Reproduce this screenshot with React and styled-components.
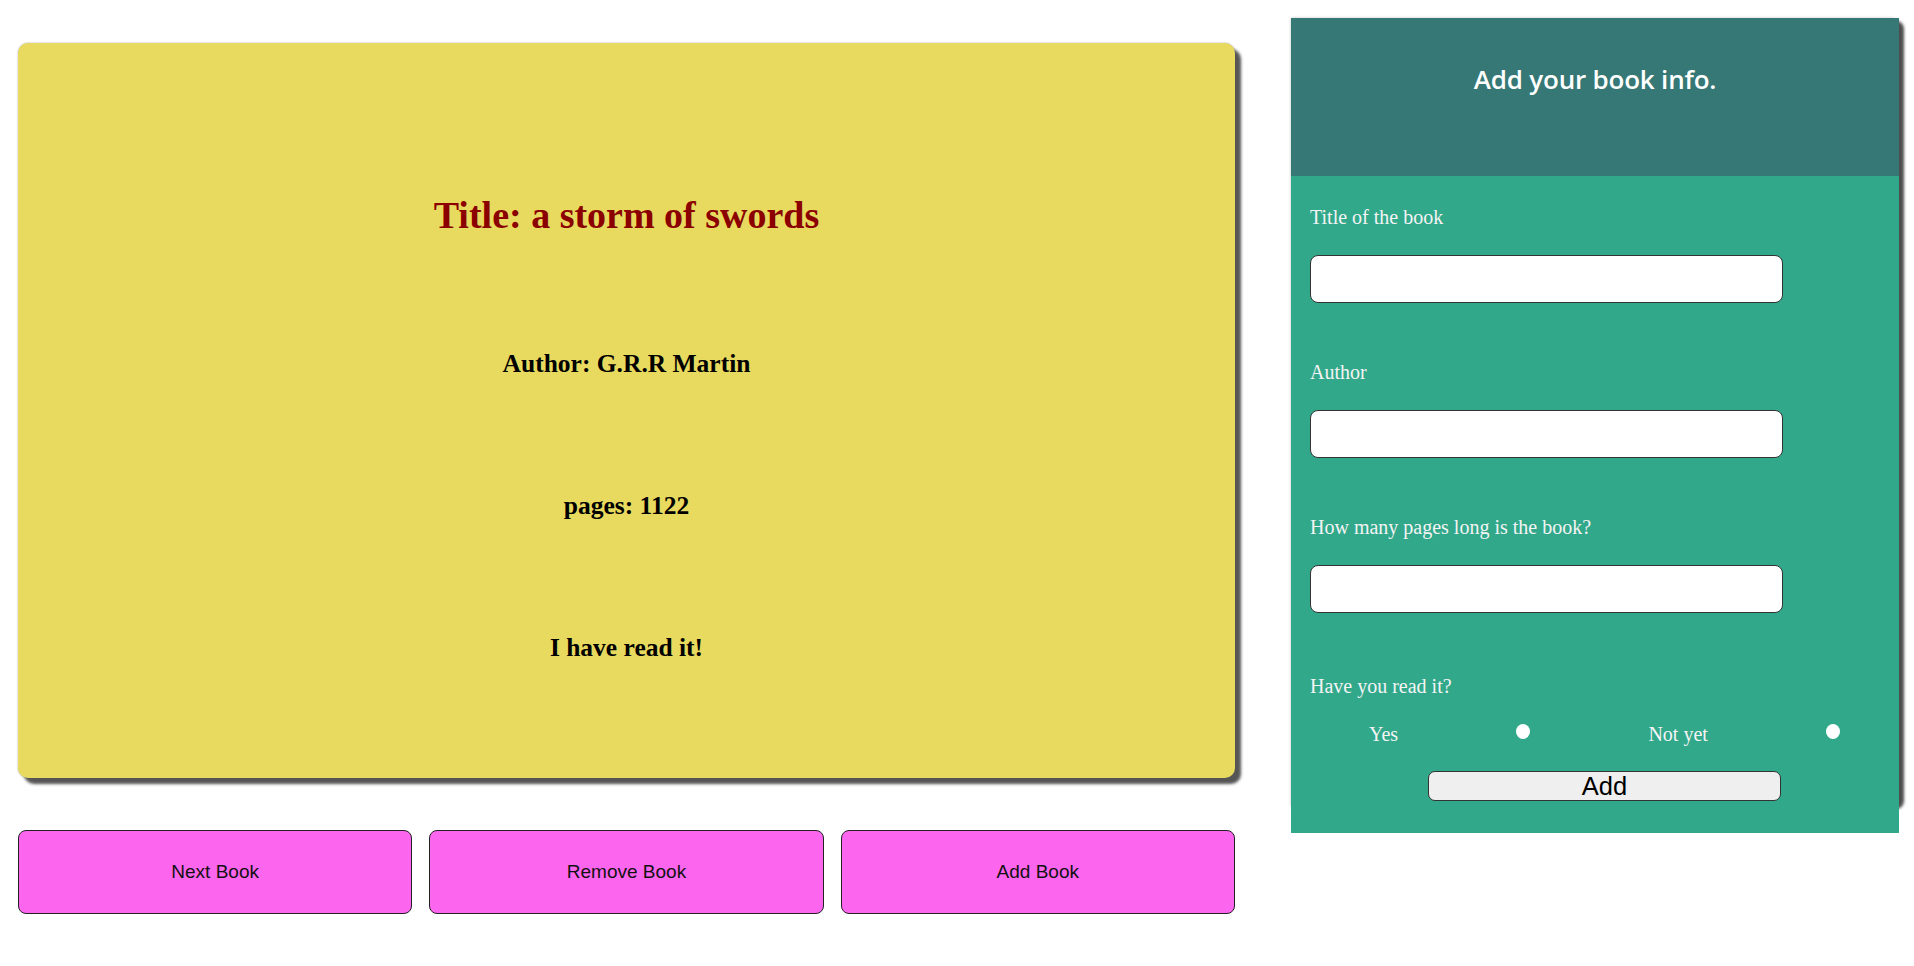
import React from "react";
import styled, { createGlobalStyle } from "styled-components";

const GlobalStyle = createGlobalStyle`
  body {
    margin: 0;
    background: #ffffff;
    font-family: "Liberation Serif", serif;
  }
`;

const Page = styled.div`
  display: flex;
  align-items: flex-start;
  gap: 56px;
  padding: 18px 0 0 18px;
`;

const LeftColumn = styled.div`
  width: 1217px;
  flex-shrink: 0;
  padding-top: 25px;
  display: flex;
  flex-direction: column;
  gap: 52px;
`;

const BookCard = styled.div`
  height: 735px;
  box-sizing: border-box;
  padding-top: 150px;
  background: #e8da5e;
  border-radius: 10px;
  box-shadow: 6px 6px 3px #555555, 0 0 2px rgba(0, 0, 0, 0.35);
  display: flex;
  flex-direction: column;
  align-items: center;
  gap: 112px;
`;

const BookTitle = styled.h1`
  margin: 0;
  font-size: 38px;
  font-weight: bold;
  color: #8b0000;
`;

const BookLine = styled.h2`
  margin: 0;
  font-size: 25.5px;
  font-weight: bold;
  color: #000000;
`;

const ButtonRow = styled.div`
  display: flex;
  gap: 17px;
`;

const ActionButton = styled.button`
  flex: 1;
  height: 84px;
  background: #fc65ed;
  border: 1px solid #222222;
  border-radius: 8px;
  font-family: "Liberation Sans", Arial, sans-serif;
  font-size: 19px;
  color: #111111;
`;

const Panel = styled.div`
  width: 608px;
  flex-shrink: 0;
  height: 788px;
  border-radius: 0 8px 8px 0;
  box-shadow: 5px 3px 3px #4d4d4d, 0 0 3px rgba(0, 0, 0, 0.25);
`;

const PanelHeader = styled.div`
  height: 158px;
  box-sizing: border-box;
  padding-top: 43px;
  background: #357875;
  text-align: center;
`;

const PanelTitle = styled.h2`
  margin: 0;
  font-family: "Open Sans", sans-serif;
  font-size: 26px;
  font-weight: 600;
  letter-spacing: -0.2px;
  color: #ffffff;
`;

const Form = styled.form`
  height: 657px;
  box-sizing: border-box;
  padding: 30px 0 0 19px;
  background: #31a88a;
  display: flex;
  flex-direction: column;
`;

const Field = styled.div`
  display: flex;
  flex-direction: column;
  align-items: flex-start;
  gap: 26px;
  margin-bottom: 58px;
`;

const Label = styled.label`
  font-size: 20px;
  color: #f4f4f4;
`;

const TextInput = styled.input`
  width: 473px;
  height: 48px;
  box-sizing: border-box;
  border: 1px solid #333333;
  border-radius: 8px;
  background: #ffffff;
`;

const Question = styled.div`
  font-size: 20px;
  color: #f4f4f4;
  margin-top: 4px;
`;

const RadioRow = styled.div`
  display: flex;
  justify-content: space-around;
  align-items: center;
  margin-top: 25px;
`;

const RadioText = styled.span`
  font-size: 20px;
  color: #f4f4f4;
`;

const Radio = styled.input`
  appearance: none;
  width: 14px;
  height: 15px;
  margin: 0 0 6px;
  border-radius: 50%;
  background: #ffffff;
`;

const SubmitRow = styled.div`
  display: flex;
  justify-content: center;
  margin-top: 25px;
`;

const SubmitButton = styled.button`
  width: 353px;
  height: 30px;
  padding: 0;
  background: #efefef;
  border: 1px solid #333333;
  border-radius: 7px;
  font-family: "Liberation Sans", Arial, sans-serif;
  font-size: 25.5px;
  line-height: 28px;
  color: #000000;
`;

const fields = ["Title of the book", "Author", "How many pages long is the book?"];

export default function App() {
  return (
    <>
      <GlobalStyle />
      <Page>
        <LeftColumn>
          <BookCard>
            <BookTitle>Title: a storm of swords</BookTitle>
            <BookLine>Author: G.R.R Martin</BookLine>
            <BookLine>pages: 1122</BookLine>
            <BookLine>I have read it!</BookLine>
          </BookCard>
          <ButtonRow>
            <ActionButton>Next Book</ActionButton>
            <ActionButton>Remove Book</ActionButton>
            <ActionButton>Add Book</ActionButton>
          </ButtonRow>
        </LeftColumn>
        <Panel>
          <PanelHeader>
            <PanelTitle>Add your book info.</PanelTitle>
          </PanelHeader>
          <Form onSubmit={(e) => e.preventDefault()}>
            {fields.map((f) => (
              <Field key={f}>
                <Label>{f}</Label>
                <TextInput type="text" />
              </Field>
            ))}
            <Question>Have you read it?</Question>
            <RadioRow>
              <RadioText>Yes</RadioText>
              <Radio type="radio" name="read" />
              <RadioText>Not yet</RadioText>
              <Radio type="radio" name="read" />
            </RadioRow>
            <SubmitRow>
              <SubmitButton type="submit">Add</SubmitButton>
            </SubmitRow>
          </Form>
        </Panel>
      </Page>
    </>
  );
}
